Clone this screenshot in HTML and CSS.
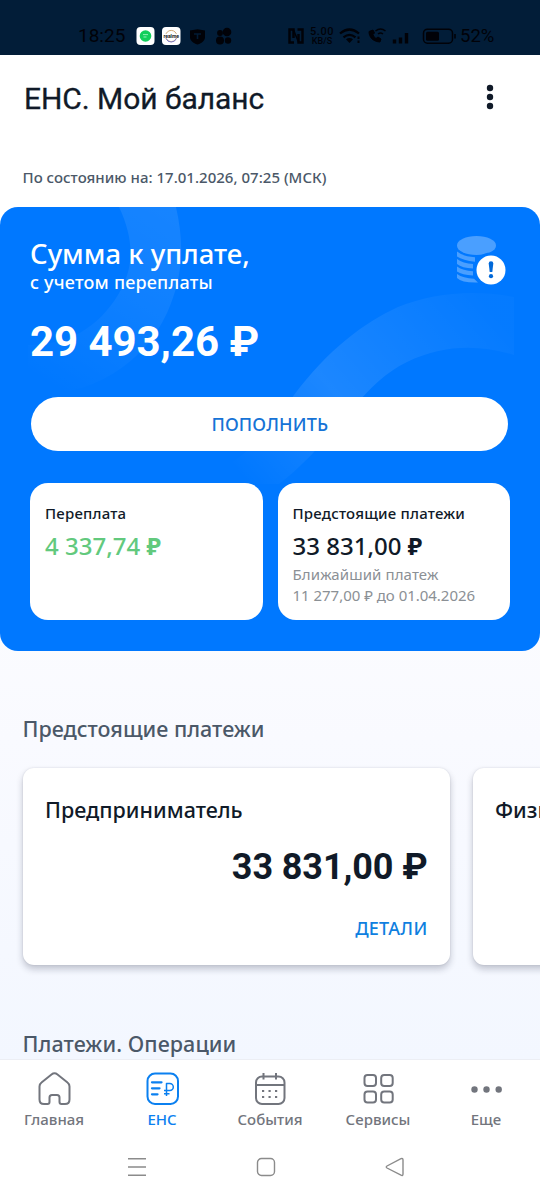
FILE: index.html
```html
<!DOCTYPE html>
<html lang="ru">
<head>
<meta charset="utf-8">
<title>ЕНС. Мой баланс</title>
<link rel="stylesheet" href="styles.css">
</head>
<body>
<div class="screen">
  <div class="status">
    <span class="status-time">18:25</span>
    <svg class="status-apps" width="98" height="20" viewBox="0 0 98 20">
      <rect x="0.5" y="1" width="18" height="18" rx="4" fill="#fff"/>
      <circle cx="9.5" cy="10" r="5.8" fill="#12cf5c"/>
      <path d="M7 8.6h5M7.5 11h3" stroke="#8ff0b5" stroke-width="1"/>
      <rect x="26" y="1" width="18.500" height="18" rx="4" fill="#fff"/>
      <circle cx="35.200" cy="10" r="5.600" fill="none" stroke="#cba06a" stroke-width=".9"/>
      <path d="M30 12.500a5.600 5.600 0 0 0 10.400 0" fill="none" stroke="#7878c8" stroke-width="1"/>
      <rect x="27.500" y="8" width="15.500" height="4" fill="#fff"/>
      <text x="35.200" y="11.700" text-anchor="middle" class="app-word">realme</text>
      <path d="M54 4.500l7.500-1.300 7.500 1.300v6.500c0 3.500-3 6-7.500 7.500-4.500-1.500-7.500-4-7.500-7.500z" fill="#010208"/>
      <path d="M58 8h7M61.500 8v5" stroke="#021b35" stroke-width="1.600"/>
      <g fill="#010208"><circle cx="91" cy="6" r="4.300"/><circle cx="84" cy="7" r="2.900"/><circle cx="84" cy="14.500" r="4"/><circle cx="92" cy="14.500" r="3.200"/></g>
    </svg>
    <svg class="status-nfc" width="16" height="18" viewBox="0 0 16 18"><path d="M6 15.500H1.500v-13H5.500V11M9.500 2.500h5v13H10.500V7" fill="none" stroke="#010208" stroke-width="2.400"/><path d="M5.500 3l5 12" stroke="#010208" stroke-width="1.500"/></svg>
    <span class="status-speed"><b>5.00</b><b class="status-unit">KB/S</b></span>
    <svg class="status-radio" width="117" height="20" viewBox="0 0 117 20">
      <g fill="none" stroke="#010208" stroke-width="2.200"><path d="M1 7.500q9.500-8 19 0M4.500 11.300q6-5 12 0"/><path d="M30 5.500c0 6 4 10 11 10.500l1-3-3-2-2 1.500q-2.500-1.500-3-4l1.500-1.500-1.500-3z" fill="#010208" stroke-width="1"/><path d="M36.500 5q5-4 10 0M39 8q2.500-2 5 0" stroke-width="1.500"/></g>
      <path d="M7 13.200q3.500-2.600 7 0L10.500 17z" fill="#010208"/><path d="M19.500 10.500v2.500M19.500 14.500v2.500" stroke="#010208" stroke-width="2"/>
      <path d="M55.500 13.500v4M61.500 11.500v6M67.500 7v10.500" stroke="#010208" stroke-width="3.400"/>
      <rect x="84.500" y="3.200" width="29" height="14" rx="4" fill="none" stroke="#010208" stroke-width="1.500"/>
      <rect x="87" y="5.700" width="13" height="9" rx="1.500" fill="#010208"/><path d="M116 8v4.500" stroke="#010208" stroke-width="1.600"/>
    </svg>
    <span class="status-battery">52%</span>
  </div>

  <header class="header">
    <h1 class="title">ЕНС. Мой баланс</h1>
    <svg width="10" height="28" viewBox="0 0 10 28" fill="#101a28"><circle cx="5" cy="5" r="3.200"/><circle cx="5" cy="14" r="3.200"/><circle cx="5" cy="23" r="3.200"/></svg>
  </header>

  <main class="content">
    <p class="as-of"><span>По состоянию на: 17.01.2026, 07:25 (МСК)</span></p>

    <section class="hero">
      <svg class="hero-decor" width="540" height="444" viewBox="0 0 540 444">
        <defs>
          <linearGradient id="ring" x1="175" y1="0" x2="60" y2="185" gradientUnits="userSpaceOnUse"><stop offset="0" stop-color="#fff" stop-opacity=".09"/><stop offset=".45" stop-color="#fff" stop-opacity=".06"/><stop offset="1" stop-color="#fff" stop-opacity="0"/></linearGradient>
          <linearGradient id="wave" x1="255" y1="285" x2="480" y2="90" gradientUnits="userSpaceOnUse"><stop offset="0" stop-color="#fff" stop-opacity="0"/><stop offset=".42" stop-color="#fff" stop-opacity=".11"/><stop offset="1" stop-color="#fff" stop-opacity=".02"/></linearGradient>
        </defs>
        <path d="M119 0C135 34 134 62 118 88C98 121 68 138 28 138V189C92 189 143 158 167 106C184 68 184 36 176 0Z" fill="url(#ring)"/>
        <path d="M185 277C240 261 270 225 294 188C328 143 363 116 398 100C433 86 473 82 514 90V148C478 137 442 138 407 155C386 165 370 181 351 203C320 240 300 261 279 277Z" fill="url(#wave)"/>
      </svg>
      <div class="hero-top">
        <div>
          <h2 class="hero-title"><span>Сумма к уплате,</span></h2>
          <p class="hero-sub"><span>с учетом переплаты</span></p>
        </div>
        <svg class="coins" width="52" height="54" viewBox="0 0 52 54">
          <g fill="#4a9fff"><ellipse cx="21.500" cy="10.500" rx="19.500" ry="9.500"/>
          <path d="M2 16.500Q8 21.500 20 22.200V26.700Q8 25.500 2 21.500z"/><path d="M2 24Q8 28.500 18 29V33.500Q7 33 2 29z"/><path d="M2 31.500Q8 35.800 18 36.300V40.500Q7 40 2 36.500z"/><path d="M2 39Q8 43.300 19 43.700L23 47.500Q7 48 2 43z"/></g>
          <circle cx="36" cy="35" r="17.500" fill="#0078ff"/><circle cx="36" cy="35" r="14.500" fill="#fff"/>
          <path d="M33.700 28.500a2.300 2.300 0 0 1 4.600 0L37.300 37h-2.600z" fill="#0068d8"/><circle cx="36" cy="41.200" r="2.100" fill="#0068d8"/>
        </svg>
      </div>
      <p class="hero-amount"><span>29 493,26 ₽</span></p>
      <button class="topup"><span>ПОПОЛНИТЬ</span></button>
      <div class="tiles">
        <article class="tile">
          <h3 class="tile-label"><span>Переплата</span></h3>
          <p class="tile-value tile-value-green"><span>4 337,74 <b>₽</b></span></p>
        </article>
        <article class="tile">
          <h3 class="tile-label"><span>Предстоящие платежи</span></h3>
          <p class="tile-value"><span>33 831,00 <b>₽</b></span></p>
          <p class="tile-note tile-note-wide"><span>Ближайший платеж</span></p>
          <p class="tile-note"><span>11 277,00 ₽ до 01.04.2026</span></p>
        </article>
      </div>
    </section>

    <h2 class="section-title"><span>Предстоящие платежи</span></h2>
    <div class="carousel">
      <article class="card">
        <h3 class="card-title"><span>Предприниматель</span></h3>
        <p class="card-amount"><span>33 831,00 ₽</span></p>
        <a class="card-link"><span>ДЕТАЛИ</span></a>
      </article>
      <article class="card">
        <h3 class="card-title"><span>Физическое лицо</span></h3>
      </article>
    </div>
    <h2 class="section-title section-title-last"><span>Платежи. Операции</span></h2>
  </main>

  <nav class="tabs">
    <a class="tab">
      <svg width="36" height="36" viewBox="0 0 36 36"><path d="M3.500 15.500Q3.500 13 5.500 11.500L15.500 3.500Q18.500 1.200 21.500 3.500L31.500 11.500Q33.500 13 33.500 15.500V28.500Q33.500 33 29 33H25.500Q23.500 33 23.500 31V26.500Q23.500 24 21 24H16Q13.500 24 13.500 26.500V31Q13.500 33 11.500 33H8Q3.500 33 3.500 28.500Z"/></svg>
      <span>Главная</span>
    </a>
    <a class="tab tab-active">
      <svg width="36" height="36" viewBox="0 0 36 36"><rect x="3.500" y="2.500" width="30.500" height="30.500" rx="7.500"/><path d="M8 11.300H17.500M8 17.300H15.500M8 23.300H13.500" stroke-width="2.300" stroke-linecap="round"/><path d="M22.500 25V12.500H25.800a3.300 3.300 0 0 1 0 7H20M20 22.700H25.500" stroke-width="1.500"/></svg>
      <span>ЕНС</span>
    </a>
    <a class="tab">
      <svg width="36" height="36" viewBox="0 0 36 36"><rect x="4" y="5.500" width="28.500" height="27.500" rx="6"/><path d="M4 14H32.500M11.500 2V8.500M24 2V8.500"/><path d="M10 20H28M10 26H28" stroke-dasharray="2.200 4.300" stroke-width="2.200"/></svg>
      <span>События</span>
    </a>
    <a class="tab">
      <svg width="36" height="36" viewBox="0 0 36 36"><rect x="4.500" y="4" width="11.500" height="11" rx="3"/><rect x="21.200" y="4" width="11.500" height="11" rx="3"/><rect x="4.500" y="20.500" width="11.500" height="11" rx="3"/><rect x="21.200" y="20.500" width="11.500" height="11" rx="3"/></svg>
      <span>Сервисы</span>
    </a>
    <a class="tab">
      <svg width="36" height="36" viewBox="0 0 36 36"><g class="solid"><circle cx="6.500" cy="18.500" r="3.200"/><circle cx="18.500" cy="18.500" r="3.200"/><circle cx="30.700" cy="18.500" r="3.200"/></g></svg>
      <span>Еще</span>
    </a>
  </nav>

  <div class="sysnav">
    <svg width="20" height="20" viewBox="0 0 20 20"><path d="M1 1.700H19M1 10H19M1 18.300H19"/></svg>
    <svg width="20" height="20" viewBox="0 0 20 20"><rect x="1.500" y="1.500" width="17" height="17" rx="4"/></svg>
    <svg width="20" height="20" viewBox="0 0 20 20"><path d="M16 1.700Q18 1 18 3V17Q18 19 16 18.200L2 11Q.5 10 2 9Z"/></svg>
  </div>
</div>
</body>
</html>
```
FILE: styles.css
```css
* { box-sizing: border-box; }
body, h1, h2, h3, p { margin: 0; font-weight: 400; }
body { font-family: "Noto Sans", sans-serif; color: #101a28; }
span { white-space: nowrap; }
svg { display: block; flex: none; }

.screen { width: 540px; height: 1200px; overflow: hidden; display: flex; flex-direction: column; background: #fff; }

.status { height: 55px; flex: none; background: #021d38; padding: 16px 0 0 78px; display: flex; align-items: center; color: #010208; font-family: Roboto, sans-serif; }
.status-time { width: 58px; font-size: 19px; }
.status-apps { margin-right: 54px; }
.status-nfc { margin-right: 4px; }
.status-speed { width: 28px; margin-right: 3px; display: flex; flex-direction: column; align-items: center; font-size: 11px; line-height: 11px; letter-spacing: .6px; }
.status-speed b { font-weight: 500; }
.status-speed .status-unit { font-size: 9px; line-height: 9px; letter-spacing: 0; }
.status-radio { margin-right: 4px; }
.status-battery { font-size: 18.500px; }
.app-word { font: 700 5px Roboto, sans-serif; fill: #222; }

.header { height: 87px; flex: none; display: flex; align-items: center; justify-content: space-between; padding: 0 45px 0 24px; }
.header svg { margin-top: -3px; }
.title { font: 400 30px/40px Roboto, sans-serif; letter-spacing: -.05px; -webkit-text-stroke: .3px; }

.content { flex: 1; min-height: 0; overflow: hidden; background: linear-gradient(#fff 0%, #fff 30%, #f9faff 65%, #f3f7ff 100%); }
.as-of { margin: 24.500px 0 20px 22.500px; height: 20px; font-size: 15px; line-height: 20px; letter-spacing: .02px; font-weight: 500; color: #4b5868; }

.hero { position: relative; height: 444px; padding: 31.500px 30px 30px; border-radius: 18px; background: #0078ff; color: #fff; overflow: hidden; }
.hero-decor { position: absolute; inset: 0; }
.hero-top, .hero-amount, .topup, .tiles { position: relative; }
.hero-top { display: flex; justify-content: space-between; height: 54px; padding-right: 3px; }
.hero-title { font-size: 27.500px; line-height: 32px; font-weight: 500; }
.hero-sub { margin-top: 2px; font-size: 18px; line-height: 20px; letter-spacing: .2px; font-weight: 500; }
.coins { margin-top: -3px; }
.hero-amount { margin-top: 25px; font: 700 42px/50px Roboto, sans-serif; letter-spacing: -.05px; }
.topup { display: block; width: 477px; height: 54px; margin: 30px 0 0 1.300px; padding: 0; border: 0; border-radius: 27px; background: #fff; color: #1673d6; font: 500 18px/54px "Noto Sans", sans-serif; letter-spacing: .15px; }
.tiles { margin-top: 32px; display: grid; grid-template-columns: 1fr 1fr; gap: 15px; }
.tile { height: 137px; padding: 20px 15px; border-radius: 18px; background: #fff; color: #101a28; }
.tile-label { font-size: 15px; line-height: 20px; letter-spacing: .2px; font-weight: 500; }
.tile-value { margin: 8px 0 3px; font-size: 24px; line-height: 30px; font-weight: 500; }
.tile-value b { font-weight: 700; }
.tile-value-green { color: #62c97d; }
.tile-note { font-size: 15px; line-height: 21px; font-weight: 400; letter-spacing: -.02px; color: #8b9095; }
.tile-note-wide { letter-spacing: .1px; }

.section-title { margin: 63.500px 0 24px 22.500px; font-size: 21.500px; line-height: 30px; font-weight: 500; color: #4b5868; }
.carousel { display: flex; gap: 22.500px; padding-left: 22.500px; }
.card { flex: none; width: 427.500px; height: 197px; padding: 27px 22.500px; border-radius: 11px; background: #fff; box-shadow: 0 4px 7px rgba(20, 25, 50, .24), 0 0 2px rgba(20, 25, 50, .12); display: flex; flex-direction: column; }
.card-title { font-size: 21.500px; line-height: 30px; font-weight: 500; }
.card-amount { margin-top: 22px; text-align: right; font: 700 36px/40px Roboto, sans-serif; letter-spacing: -.1px; }
.card-link { margin-top: 26px; text-align: right; font-size: 18px; line-height: 30px; letter-spacing: .3px; font-weight: 500; color: #0f7fe0; }
.section-title-last { letter-spacing: .07px; margin-top: 64px; margin-bottom: 0; }

.tabs { flex: none; height: 81px; border-top: 1px solid #eceef4; display: grid; grid-template-columns: repeat(5, 1fr); background: #fff; }
.tab { display: flex; flex-direction: column; align-items: center; padding-top: 11px; font-size: 15px; line-height: 20px; font-weight: 500; color: #72757d; }
.tab svg { fill: none; stroke: currentColor; stroke-width: 2; stroke-linejoin: round; margin-bottom: 2px; }
.tab .solid { fill: currentColor; stroke: none; }
.tab-active { color: #0b80f0; }

.sysnav { flex: none; height: 60px; padding: 17px 0 0 127px; display: flex; gap: 109px; background: #fff; }
.sysnav svg { fill: none; stroke: #8b8b8b; stroke-width: 1.400; }
```
